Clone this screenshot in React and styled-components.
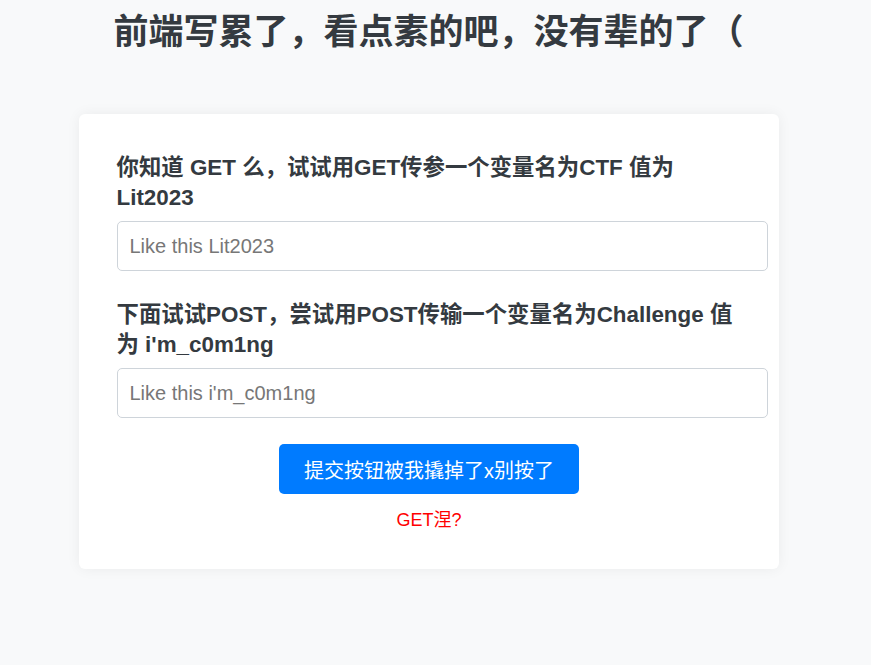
import React from "react"
import styled, { createGlobalStyle } from "styled-components"

const GlobalStyle = createGlobalStyle`
  html, body {
    margin: 0;
    padding: 0;
    min-height: 100%;
    background: #f8f9fa;
  }
  body {
    font-family: "Liberation Sans", "Noto Sans CJK SC", sans-serif;
    color: #343a40;
  }
`

const fields = [
  {
    name: "CTF",
    label: "你知道 GET 么，试试用GET传参一个变量名为CTF 值为 Lit2023",
    placeholder: "Like this Lit2023",
  },
  {
    name: "Challenge",
    label: "下面试试POST，尝试用POST传输一个变量名为Challenge 值为 i'm_c0m1ng",
    placeholder: "Like this i'm_c0m1ng",
  },
]

function App() {
  return (
    <Page>
      <GlobalStyle />
      <Title>前端写累了，看点素的吧，没有辈的了（</Title>
      <Card>
        <Form onSubmit={(e) => e.preventDefault()}>
          {fields.map((f) => (
            <Group key={f.name}>
              <Label htmlFor={f.name}>{f.label}</Label>
              <Input id={f.name} name={f.name} placeholder={f.placeholder} />
            </Group>
          ))}
          <Actions>
            <SubmitButton type="button">提交按钮被我撬掉了x别按了</SubmitButton>
            <Hint>GET涅?</Hint>
          </Actions>
        </Form>
      </Card>
    </Page>
  )
}

export default App

const Page = styled.div`
  min-height: 665px;
  padding: 10px 14px 0 0;
  box-sizing: border-box;
  display: flex;
  flex-direction: column;
  align-items: center;
`

const Title = styled.h1`
  margin: 0;
  font-size: 35px;
  line-height: 43px;
  font-weight: 700;
  color: #343a40;
  text-align: center;
`

const Card = styled.div`
  margin-top: 61px;
  width: 700px;
  box-sizing: border-box;
  padding: 39px 37px 35px 38px;
  background: #fff;
  border-radius: 6px;
  box-shadow: 0 0 14px rgba(0, 0, 0, 0.06);
`

const Form = styled.form`
  display: flex;
  flex-direction: column;
`

const Group = styled.div`
  display: flex;
  flex-direction: column;
  align-items: flex-start;
  margin-bottom: 29px;
`

const Label = styled.label`
  font-size: 22.4px;
  line-height: 30px;
  font-weight: 700;
  color: #343a40;
  margin-bottom: 8px;
`

const Input = styled.input`
  box-sizing: content-box;
  width: 100%;
  height: 24px;
  padding: 12px;
  border: 1px solid #ced4da;
  border-radius: 5px;
  font-family: "Liberation Sans", "Noto Sans CJK SC", sans-serif;
  font-size: 20px;
  color: #495057;
  background: #fff;
  outline: none;

  &::placeholder {
    color: #777;
  }
`

const Actions = styled.div`
  display: flex;
  flex-direction: column;
  align-items: center;
  gap: 12px;
  margin-top: -3px;
`

const SubmitButton = styled.button`
  width: 300px;
  height: 50px;
  border: none;
  border-radius: 5px;
  background: #007bff;
  color: #fff;
  font-family: "Liberation Sans", "Noto Sans CJK SC", sans-serif;
  font-size: 20px;
  cursor: pointer;
`

const Hint = styled.p`
  margin: 0;
  font-size: 18px;
  line-height: 28px;
  color: #ff0000;
`
